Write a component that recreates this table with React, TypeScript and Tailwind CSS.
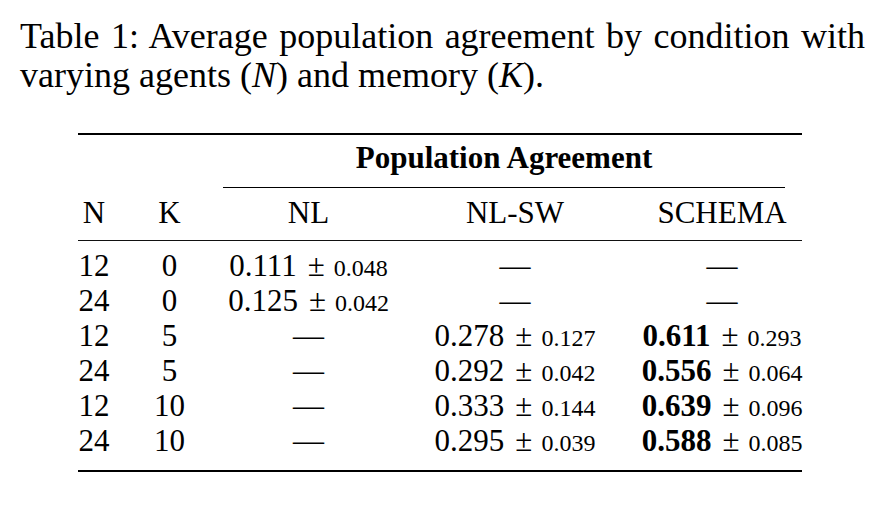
const rows: { n: string; k: string; nl?: [string, string]; sw?: [string, string]; schema?: [string, string] }[] = [
  { n: "12", k: "0", nl: ["0.111", "0.048"] },
  { n: "24", k: "0", nl: ["0.125", "0.042"] },
  { n: "12", k: "5", sw: ["0.278", "0.127"], schema: ["0.611", "0.293"] },
  { n: "24", k: "5", sw: ["0.292", "0.042"], schema: ["0.556", "0.064"] },
  { n: "12", k: "10", sw: ["0.333", "0.144"], schema: ["0.639", "0.096"] },
  { n: "24", k: "10", sw: ["0.295", "0.039"], schema: ["0.588", "0.085"] },
];

const cols = "grid grid-cols-[32px_119px_159px_254px_160px]";

const Value = ({ v, bold }: { v?: [string, string]; bold?: boolean }) => {
  if (!v) return <span>—</span>;
  return (
    <span className="whitespace-nowrap">
      <span className={bold ? "font-bold" : ""}>{v[0]}</span>
      <span className="ml-[11px] mr-[9px]">±</span>
      <span className="text-[24px] leading-none">{v[1]}</span>
    </span>
  );
};

const Cell = ({ children }: { children: React.ReactNode }) => (
  <div className="flex justify-center whitespace-nowrap">
    <div>{children}</div>
  </div>
);

const App = () => {
  return (
    <div className="w-[890px] h-[507px] bg-white text-black font-['Liberation_Serif',serif] overflow-hidden">
      <div className="pl-[20px] pr-[25px] pt-[17px] text-[36px] leading-[39px]">
        <div className="text-justify [text-align-last:justify] whitespace-nowrap">
          Table 1: Average population agreement by condition with
        </div>
        <div>
          varying agents (<i>N</i>) and memory (<i>K</i>).
        </div>
      </div>

      <div className="ml-[78px] mt-[38px] w-[724px] text-[31px] leading-[35px]">
        <div className="h-[2px] bg-black" />
        <div className="mt-[5px] ml-[145px] mr-[17px] text-center font-bold">
          Population Agreement
        </div>
        <div className="mt-[12px] ml-[145px] mr-[17px] h-px bg-black" />
        <div className={`${cols} mt-[7px]`}>
          <Cell>N</Cell>
          <Cell>K</Cell>
          <Cell>NL</Cell>
          <Cell>NL-SW</Cell>
          <Cell>SCHEMA</Cell>
        </div>
        <div className="mt-[10px] h-px bg-[#111]" />
        <div className="pt-[7px] pb-[12px]">
          {rows.map((r, i) => (
            <div key={i} className={cols}>
              <Cell>{r.n}</Cell>
              <Cell>{r.k}</Cell>
              <Cell>
                <Value v={r.nl} />
              </Cell>
              <Cell>
                <Value v={r.sw} />
              </Cell>
              <Cell>
                <Value v={r.schema} bold />
              </Cell>
            </div>
          ))}
        </div>
        <div className="h-[2px] bg-black" />
      </div>
    </div>
  );
};

export default App;
